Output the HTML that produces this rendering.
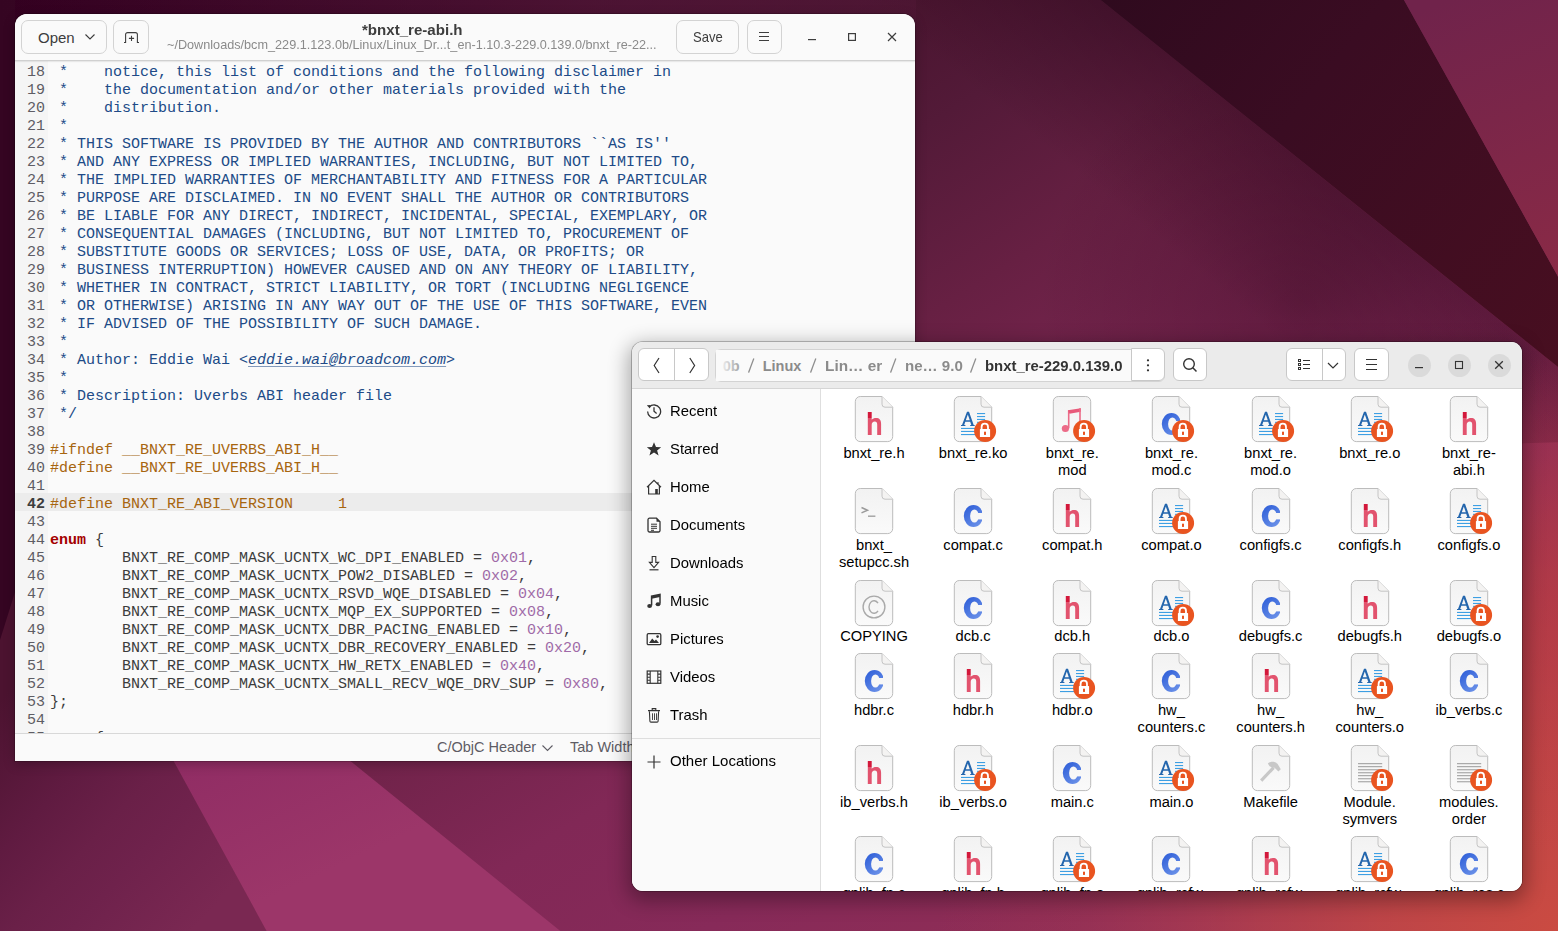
<!DOCTYPE html>
<html><head><meta charset="utf-8">
<style>
*{box-sizing:border-box}
html,body{margin:0;padding:0}
body{width:1558px;height:931px;overflow:hidden;position:relative;font-family:"Liberation Sans",sans-serif;background:#4a1530}
#bg{position:absolute;left:0;top:0}
#gedit{position:absolute;left:15px;top:14px;width:900px;height:747px;background:#fafafa;border-radius:12px 12px 0 0;overflow:hidden;box-shadow:0 0 0 1px rgba(0,0,0,0.18),0 3px 12px rgba(0,0,0,0.25)}
#ghead{position:absolute;left:0;top:0;width:900px;height:47px;background:#fafafa;border-bottom:1px solid #d0d0d0;box-shadow:0 1px 1px rgba(0,0,0,0.07);z-index:2}
.gbtn{position:absolute;top:6px;height:34px;border:1px solid #d3d3d3;border-radius:7px;background:#fafafa}
.gtxt{position:absolute;white-space:nowrap;color:#3d3d3d}
#code{position:absolute;left:0;top:47px;width:900px;height:672px;overflow:hidden;background:#fafafa}
#gutter{position:absolute;left:0;top:0;width:33px;height:672px;background:#f5f5f5}
.ln{position:absolute;left:0;width:900px;height:18px;font-family:"Liberation Mono",monospace;font-size:15px;line-height:18px;white-space:pre;color:#3c3c3c}
.ln.cur{background:#ececec}
.ln .n{position:absolute;left:0;top:3px;width:30px;text-align:right;color:#5e5c64}
.ln.cur .n{font-weight:bold;color:#3d3d3d}
.ln .t{position:absolute;left:35px;top:3px}
.cm{color:#204a87}
.em{color:#204a87;font-style:italic;text-decoration:underline;text-decoration-color:rgba(32,74,135,0.55);text-decoration-thickness:1px;text-underline-offset:2px}
.pp{color:#a7650f}
.kw{color:#a40000;font-weight:bold}
.nu{color:#a06aa8}
#status{position:absolute;left:0;top:719px;width:900px;height:28px;background:#fafafa;border-top:1px solid #d8d8d8}

.sx{display:inline-block;transform-origin:0 0}
#naut{position:absolute;left:632px;top:342px;width:890px;height:549px;border-radius:11px;overflow:hidden;background:#fff;box-shadow:0 0 0 1px rgba(0,0,0,0.23),0 6px 20px 4px rgba(0,0,0,0.32)}
#nhead{position:absolute;left:0;top:0;width:890px;height:47px;background:#ebebeb;border-bottom:1px solid #d5d5d5}
.nbtn{position:absolute;top:6.3px;height:33.2px;background:#fff;border:1px solid #c8c8c8;border-radius:6px}
.vdiv{position:absolute;top:7px;width:1px;height:32px;background:#c8c8c8}
.ic{position:absolute}
#pathbar{position:absolute;top:6.5px;height:33px;background:#fafafa;border:1px solid #d3d3d3;border-radius:6px}
.crumbs{position:absolute;left:0;top:0}
.cr{position:absolute;top:15.5px;font-size:14.5px;line-height:17px;font-weight:bold;color:#8b8b8b;white-space:nowrap}
.cr.cur{color:#333}
.sl{position:absolute;top:14px;font-size:14.5px;line-height:17px;color:#8b8b8b}
.pfade{position:absolute;top:7.5px;width:30px;height:31px;background:linear-gradient(90deg,#fafafa 10%,rgba(250,250,250,0))}
.wc{position:absolute;top:11.5px;width:23px;height:23px;border-radius:50%;background:#dadada}
#side{position:absolute;left:0;top:47px;width:189px;height:502px;background:#fafafa;border-right:1px solid #dedede}
.si{position:absolute;left:38.4px;font-size:14.5px;line-height:17px;color:#000;white-space:nowrap}
.sep{position:absolute;left:0;width:188px;height:1px;background:#dedede}
#content{position:absolute;left:189px;top:47px;width:701px;height:502px;background:#fff;overflow:hidden}
.fi{position:absolute}
.lab{position:absolute;width:100px;text-align:center;font-size:14.7px;line-height:17px;color:#000;white-space:nowrap}

</style></head><body>
<svg id="bg" width="1558" height="931" viewBox="0 0 1558 931">
<defs>
<linearGradient id="gM" x1="0" y1="0" x2="856" y2="1370" gradientUnits="userSpaceOnUse">
<stop offset="0" stop-color="#330020"/>
<stop offset="0.16" stop-color="#380524"/>
<stop offset="0.30" stop-color="#4a1530"/>
<stop offset="0.37" stop-color="#531a38"/>
<stop offset="0.47" stop-color="#672043"/>
<stop offset="0.62" stop-color="#812856"/>
<stop offset="0.72" stop-color="#872a59"/>
<stop offset="0.82" stop-color="#8e2d56"/>
<stop offset="1" stop-color="#98345e"/>
</linearGradient>
<radialGradient id="gO" cx="1558" cy="931" r="620" gradientUnits="userSpaceOnUse">
<stop offset="0" stop-color="#cd4c40" stop-opacity="0.95"/>
<stop offset="0.29" stop-color="#cd4c40" stop-opacity="0.72"/>
<stop offset="0.48" stop-color="#c94a42" stop-opacity="0.5"/>
<stop offset="0.77" stop-color="#b8404a" stop-opacity="0.15"/>
<stop offset="1" stop-color="#b8404a" stop-opacity="0"/>
</radialGradient>
<linearGradient id="gW" x1="1100" y1="0" x2="1600" y2="400" gradientUnits="userSpaceOnUse">
<stop offset="0" stop-color="#2f0a1e"/>
<stop offset="0.35" stop-color="#3a0c22"/>
<stop offset="1" stop-color="#4a0f20"/>
</linearGradient>
<linearGradient id="gR" x1="1450" y1="0" x2="1558" y2="280" gradientUnits="userSpaceOnUse">
<stop offset="0" stop-color="#70234b"/>
<stop offset="1" stop-color="#8a2a46"/>
</linearGradient>
<linearGradient id="gSh" x1="1100.7" y1="0" x2="1006" y2="116" gradientUnits="userSpaceOnUse">
<stop offset="0" stop-color="#1e0010" stop-opacity="0.32"/>
<stop offset="1" stop-color="#200010" stop-opacity="0"/>
</linearGradient>
<linearGradient id="gB" x1="0" y1="504" x2="200" y2="931" gradientUnits="userSpaceOnUse">
<stop offset="0" stop-color="#7e2558"/>
<stop offset="0.6" stop-color="#8e2b63"/>
<stop offset="1" stop-color="#9c3669"/>
</linearGradient>
<linearGradient id="gL" x1="0" y1="700" x2="220" y2="900" gradientUnits="userSpaceOnUse">
<stop offset="0" stop-color="#4c1330"/>
<stop offset="0.35" stop-color="#601b41"/>
<stop offset="0.55" stop-color="#6a2048"/>
<stop offset="0.7" stop-color="#6f224c"/>
<stop offset="1" stop-color="#7a2852"/>
</linearGradient>
<radialGradient id="gSh2" cx="1300" cy="300" r="260" gradientUnits="userSpaceOnUse"><stop offset="0" stop-color="#1e0010" stop-opacity="0.3"/><stop offset="1" stop-color="#1e0010" stop-opacity="0"/></radialGradient>
<linearGradient id="gTop" x1="0" y1="0" x2="920" y2="0" gradientUnits="userSpaceOnUse">
<stop offset="0" stop-color="#55193a" stop-opacity="0"/>
<stop offset="0.12" stop-color="#55193a" stop-opacity="0.1"/>
<stop offset="0.33" stop-color="#55193a" stop-opacity="0.32"/>
<stop offset="0.65" stop-color="#55193a" stop-opacity="0.62"/>
<stop offset="0.82" stop-color="#55193a" stop-opacity="0.58"/>
<stop offset="1" stop-color="#55193a" stop-opacity="0.35"/>
</linearGradient>
<radialGradient id="gRed" cx="1620" cy="600" r="270" gradientUnits="userSpaceOnUse"><stop offset="0" stop-color="#c43c3c" stop-opacity="0.5"/><stop offset="1" stop-color="#c43c3c" stop-opacity="0"/></radialGradient>
</defs>
<rect width="1558" height="931" fill="url(#gM)"/>
<rect width="1558" height="931" fill="url(#gO)"/>
<polygon points="1100.7,0 1649,440 1300,449 750,0" fill="url(#gSh)"/>
<polygon points="1100.7,0 1649,440 1558,449 1100,449 900,0" fill="url(#gSh2)"/>
<rect x="1300" y="330" width="258" height="601" fill="url(#gRed)"/>
<polygon points="1100.7,0 1404,0 1649,440" fill="url(#gW)"/>
<polygon points="1404,0 1558,0 1558,276.5" fill="url(#gR)"/>
<polygon points="0,477 33,504 266.6,931 0,931" fill="url(#gL)"/>
<polygon points="33,504 266.6,931 560.3,931" fill="url(#gB)"/>
<polygon points="0,0 15,0 15,592 0,640" fill="#350522"/>
<rect x="0" y="0" width="916" height="26" fill="url(#gTop)"/>
</svg>

<div id="gedit">
 <div id="ghead">
  <div class="gbtn" style="left:6px;width:85.5px"></div>
  <div class="gtxt" style="left:23px;top:14.5px;font-size:15px;line-height:18px">Open</div>
  <svg style="position:absolute;left:70px;top:20px" width="10" height="6" viewBox="0 0 10 6"><path d="M0.5 0.5 L5 5 L9.5 0.5" fill="none" stroke="#3d3d3d" stroke-width="1.1"/></svg>
  <div class="gbtn" style="left:98px;width:35.5px"></div>
  <svg style="position:absolute;left:105px;top:14px" width="22" height="18" viewBox="0 0 22 18"><path d="M4,14.5 H5.6 V6.6 A2 2 0 0 1 7.6,4.6 H15.4 A2 2 0 0 1 17.4,6.6 V14.5 H19 M11.5,7.8 V13 M8.9,10.4 H14.1" fill="none" stroke="#3d3d3d" stroke-width="1.1"/></svg>
  <div class="gtxt" style="left:347px;top:8px;font-size:14.5px;line-height:17px;font-weight:bold"><span class="sx" style="transform:scaleX(1.04)">*bnxt_re-abi.h</span></div>
  <div class="gtxt" style="left:152px;top:23px;font-size:13.5px;line-height:16px;color:#8a8a8a"><span class="sx" style="transform:scaleX(0.938)">~/Downloads/bcm_229.1.123.0b/Linux/Linux_Dr...t_en-1.10.3-229.0.139.0/bnxt_re-22...</span></div>
  <div class="gbtn" style="left:661px;width:63px"></div>
  <div class="gtxt" style="left:678px;top:14px;font-size:15px;line-height:18px"><span class="sx" style="transform:scaleX(0.87)">Save</span></div>
  <div class="gbtn" style="left:731.5px;width:35px"></div>
  <svg style="position:absolute;left:743px;top:17px" width="12" height="12" viewBox="0 0 12 12"><path d="M1 1.5 H11 M1 5.5 H11 M1 9.5 H11" fill="none" stroke="#3d3d3d" stroke-width="1.1"/></svg>
  <svg style="position:absolute;left:792px;top:23px" width="10" height="4" viewBox="0 0 10 4"><rect x="1" y="2" width="8" height="1.2" fill="#3d3d3d"/></svg>
  <svg style="position:absolute;left:832px;top:18px" width="10" height="10" viewBox="0 0 10 10"><rect x="1.6" y="1.6" width="6.8" height="6.8" fill="none" stroke="#3d3d3d" stroke-width="1.2"/></svg>
  <svg style="position:absolute;left:872px;top:18px" width="10" height="10" viewBox="0 0 10 10"><path d="M1 1 L9 9 M9 1 L1 9" stroke="#3d3d3d" stroke-width="1.2"/></svg>
 </div>
 <div id="code"><div id="gutter"></div>
<div class="ln" style="top:0px"><span class="n">18</span><span class="t"><span class="cm"> *    notice, this list of conditions and the following disclaimer in</span></span></div>
<div class="ln" style="top:18px"><span class="n">19</span><span class="t"><span class="cm"> *    the documentation and/or other materials provided with the</span></span></div>
<div class="ln" style="top:36px"><span class="n">20</span><span class="t"><span class="cm"> *    distribution.</span></span></div>
<div class="ln" style="top:54px"><span class="n">21</span><span class="t"><span class="cm"> *</span></span></div>
<div class="ln" style="top:72px"><span class="n">22</span><span class="t"><span class="cm"> * THIS SOFTWARE IS PROVIDED BY THE AUTHOR AND CONTRIBUTORS ``AS IS&#x27;&#x27;</span></span></div>
<div class="ln" style="top:90px"><span class="n">23</span><span class="t"><span class="cm"> * AND ANY EXPRESS OR IMPLIED WARRANTIES, INCLUDING, BUT NOT LIMITED TO,</span></span></div>
<div class="ln" style="top:108px"><span class="n">24</span><span class="t"><span class="cm"> * THE IMPLIED WARRANTIES OF MERCHANTABILITY AND FITNESS FOR A PARTICULAR</span></span></div>
<div class="ln" style="top:126px"><span class="n">25</span><span class="t"><span class="cm"> * PURPOSE ARE DISCLAIMED. IN NO EVENT SHALL THE AUTHOR OR CONTRIBUTORS</span></span></div>
<div class="ln" style="top:144px"><span class="n">26</span><span class="t"><span class="cm"> * BE LIABLE FOR ANY DIRECT, INDIRECT, INCIDENTAL, SPECIAL, EXEMPLARY, OR</span></span></div>
<div class="ln" style="top:162px"><span class="n">27</span><span class="t"><span class="cm"> * CONSEQUENTIAL DAMAGES (INCLUDING, BUT NOT LIMITED TO, PROCUREMENT OF</span></span></div>
<div class="ln" style="top:180px"><span class="n">28</span><span class="t"><span class="cm"> * SUBSTITUTE GOODS OR SERVICES; LOSS OF USE, DATA, OR PROFITS; OR</span></span></div>
<div class="ln" style="top:198px"><span class="n">29</span><span class="t"><span class="cm"> * BUSINESS INTERRUPTION) HOWEVER CAUSED AND ON ANY THEORY OF LIABILITY,</span></span></div>
<div class="ln" style="top:216px"><span class="n">30</span><span class="t"><span class="cm"> * WHETHER IN CONTRACT, STRICT LIABILITY, OR TORT (INCLUDING NEGLIGENCE</span></span></div>
<div class="ln" style="top:234px"><span class="n">31</span><span class="t"><span class="cm"> * OR OTHERWISE) ARISING IN ANY WAY OUT OF THE USE OF THIS SOFTWARE, EVEN</span></span></div>
<div class="ln" style="top:252px"><span class="n">32</span><span class="t"><span class="cm"> * IF ADVISED OF THE POSSIBILITY OF SUCH DAMAGE.</span></span></div>
<div class="ln" style="top:270px"><span class="n">33</span><span class="t"><span class="cm"> *</span></span></div>
<div class="ln" style="top:288px"><span class="n">34</span><span class="t"><span class="cm"> * Author: Eddie Wai &lt;</span><span class="em">eddie.wai@broadcom.com</span><span class="cm">&gt;</span></span></div>
<div class="ln" style="top:306px"><span class="n">35</span><span class="t"><span class="cm"> *</span></span></div>
<div class="ln" style="top:324px"><span class="n">36</span><span class="t"><span class="cm"> * Description: Uverbs ABI header file</span></span></div>
<div class="ln" style="top:342px"><span class="n">37</span><span class="t"><span class="cm"> */</span></span></div>
<div class="ln" style="top:360px"><span class="n">38</span><span class="t"></span></div>
<div class="ln" style="top:378px"><span class="n">39</span><span class="t"><span class="pp">#ifndef __BNXT_RE_UVERBS_ABI_H__</span></span></div>
<div class="ln" style="top:396px"><span class="n">40</span><span class="t"><span class="pp">#define __BNXT_RE_UVERBS_ABI_H__</span></span></div>
<div class="ln" style="top:414px"><span class="n">41</span><span class="t"></span></div>
<div class="ln cur" style="top:432px"><span class="n">42</span><span class="t"><span class="pp">#define BNXT_RE_ABI_VERSION     1</span></span></div>
<div class="ln" style="top:450px"><span class="n">43</span><span class="t"></span></div>
<div class="ln" style="top:468px"><span class="n">44</span><span class="t"><span class="kw">enum</span><span> {</span></span></div>
<div class="ln" style="top:486px"><span class="n">45</span><span class="t"><span>        BNXT_RE_COMP_MASK_UCNTX_WC_DPI_ENABLED = </span><span class="nu">0x01</span><span>,</span></span></div>
<div class="ln" style="top:504px"><span class="n">46</span><span class="t"><span>        BNXT_RE_COMP_MASK_UCNTX_POW2_DISABLED = </span><span class="nu">0x02</span><span>,</span></span></div>
<div class="ln" style="top:522px"><span class="n">47</span><span class="t"><span>        BNXT_RE_COMP_MASK_UCNTX_RSVD_WQE_DISABLED = </span><span class="nu">0x04</span><span>,</span></span></div>
<div class="ln" style="top:540px"><span class="n">48</span><span class="t"><span>        BNXT_RE_COMP_MASK_UCNTX_MQP_EX_SUPPORTED = </span><span class="nu">0x08</span><span>,</span></span></div>
<div class="ln" style="top:558px"><span class="n">49</span><span class="t"><span>        BNXT_RE_COMP_MASK_UCNTX_DBR_PACING_ENABLED = </span><span class="nu">0x10</span><span>,</span></span></div>
<div class="ln" style="top:576px"><span class="n">50</span><span class="t"><span>        BNXT_RE_COMP_MASK_UCNTX_DBR_RECOVERY_ENABLED = </span><span class="nu">0x20</span><span>,</span></span></div>
<div class="ln" style="top:594px"><span class="n">51</span><span class="t"><span>        BNXT_RE_COMP_MASK_UCNTX_HW_RETX_ENABLED = </span><span class="nu">0x40</span><span>,</span></span></div>
<div class="ln" style="top:612px"><span class="n">52</span><span class="t"><span>        BNXT_RE_COMP_MASK_UCNTX_SMALL_RECV_WQE_DRV_SUP = </span><span class="nu">0x80</span><span>,</span></span></div>
<div class="ln" style="top:630px"><span class="n">53</span><span class="t"><span>};</span></span></div>
<div class="ln" style="top:648px"><span class="n">54</span><span class="t"></span></div>
<div class="ln" style="top:666px"><span class="n">55</span><span class="t"><span class="kw">enum</span><span> {</span></span></div>
 </div>
 <div id="status">
  <div class="gtxt" style="left:422px;top:5px;font-size:14.5px;line-height:17px;color:#5e5c64">C/ObjC Header</div>
  <svg style="position:absolute;left:527px;top:11px" width="11" height="7" viewBox="0 0 11 7"><path d="M0.5 0.5 L5.5 5.5 L10.5 0.5" fill="none" stroke="#5e5c64" stroke-width="1.1"/></svg>
  <div class="gtxt" style="left:555px;top:5px;font-size:14.5px;line-height:17px;color:#5e5c64">Tab Width: 8</div>
 </div>
</div>

<div id="naut">
<svg width="0" height="0" style="position:absolute"><defs>
<linearGradient id="pg" x1="0" y1="1" x2="0" y2="47" gradientUnits="userSpaceOnUse"><stop offset="0" stop-color="#f2f2f2"/><stop offset="1" stop-color="#fafafa"/></linearGradient>
<linearGradient id="hg" x1="0" y1="0" x2="0" y2="48" gradientUnits="userSpaceOnUse"><stop offset="0.48" stop-color="#d3183b"/><stop offset="0.48" stop-color="#e2536e"/><stop offset="1" stop-color="#e2536e"/></linearGradient>
<linearGradient id="cg" x1="15" y1="18" x2="33" y2="40" gradientUnits="userSpaceOnUse"><stop offset="0" stop-color="#2a5bd7"/><stop offset="1" stop-color="#7196ea"/></linearGradient>
<mask id="cm" maskUnits="userSpaceOnUse" x="0" y="0" width="52" height="52"><rect width="52" height="52" fill="#fff"/><rect x="25" y="26" width="20" height="6.4" fill="#000"/><rect x="33" y="0" width="20" height="52" fill="#000"/></mask>
</defs></svg>
<div id="nhead">
<div class="nbtn" style="left:6.4px;width:70.2px;"></div>
<div class="vdiv" style="left:41.6px"></div>
<svg class="ic" style="left:20.5px;top:15px" width="8" height="17" viewBox="0 0 8 17"><path d="M6,1 L1.2,8.5 L6,16" fill="none" stroke="#333" stroke-width="1.2"/></svg>
<svg class="ic" style="left:56.5px;top:15px" width="8" height="17" viewBox="0 0 8 17"><path d="M0.8,1 L5.6,8.5 L0.8,16" fill="none" stroke="#333" stroke-width="1.2"/></svg>
<div id="pathbar" style="left:83.4px;width:449.9px"></div>
<div class="nbtn" style="left:498.6px;width:34.7px;border-radius:0 6px 6px 0"></div>
<svg class="ic" style="left:514px;top:15px" width="4" height="16" viewBox="0 0 4 16"><circle cx="2" cy="3.3" r="1.15" fill="#333"/><circle cx="2" cy="8.3" r="1.15" fill="#333"/><circle cx="2" cy="13.3" r="1.15" fill="#333"/></svg>
<svg class="ic" style="left:115.79999999999995px;top:16px" width="7" height="16" viewBox="0 0 7 16"><path d="M5.8,0.6 L0.6,14.6" stroke="#8e8e8e" stroke-width="1.3"/></svg>
<svg class="ic" style="left:178px;top:16px" width="7" height="16" viewBox="0 0 7 16"><path d="M5.8,0.6 L0.6,14.6" stroke="#8e8e8e" stroke-width="1.3"/></svg>
<svg class="ic" style="left:258px;top:16px" width="7" height="16" viewBox="0 0 7 16"><path d="M5.8,0.6 L0.6,14.6" stroke="#8e8e8e" stroke-width="1.3"/></svg>
<svg class="ic" style="left:337.79999999999995px;top:16px" width="7" height="16" viewBox="0 0 7 16"><path d="M5.8,0.6 L0.6,14.6" stroke="#8e8e8e" stroke-width="1.3"/></svg>
<span class="cr" style="left:90.7px"><span class="sx" style="transform:scaleX(1)">0b</span></span>
<span class="cr" style="left:130.7px"><span class="sx" style="transform:scaleX(1)">Linux</span></span>
<span class="cr" style="left:193px"><span class="sx" style="transform:scaleX(1.06)">Lin… er</span></span>
<span class="cr" style="left:273px"><span class="sx" style="transform:scaleX(1.04)">ne… 9.0</span></span>
<span class="cr cur" style="left:352.5px"><span class="sx" style="transform:scaleX(1.027)">bnxt_re-229.0.139.0</span></span>
<div class="pfade" style="left:84.4px"></div>
<div class="nbtn" style="left:540.5px;width:34.9px;"></div>
<svg class="ic" style="left:550px;top:15px" width="16" height="16" viewBox="0 0 16 16"><circle cx="7" cy="7" r="5.3" fill="none" stroke="#333" stroke-width="1.4"/><path d="M10.8,10.8 L14.5,14.5" stroke="#333" stroke-width="1.5"/></svg>
<div class="nbtn" style="left:654.4px;width:59.9px;"></div>
<div class="vdiv" style="left:689.7px"></div>
<svg class="ic" style="left:664px;top:15px" width="16" height="16" viewBox="0 0 16 16"><g fill="none" stroke="#333" stroke-width="1"><rect x="2.5" y="2.5" width="2" height="2"/><rect x="2.5" y="6.5" width="2" height="2"/><rect x="2.5" y="10.5" width="2" height="2"/><path d="M7,3.5 H14 M7,7.5 H14 M7,11.5 H14" stroke-width="1"/></g></svg>
<svg class="ic" style="left:695px;top:20px" width="12" height="8" viewBox="0 0 12 8"><path d="M1,1 L6,6 L11,1" fill="none" stroke="#333" stroke-width="1.2"/></svg>
<div class="nbtn" style="left:721.5px;width:35.1px;"></div>
<svg class="ic" style="left:733px;top:16px" width="14" height="14" viewBox="0 0 14 14"><path d="M1,1.5 H12 M1,6.5 H12 M1,11.5 H12" fill="none" stroke="#333" stroke-width="1"/></svg>
<div class="wc" style="left:775.5px"></div>
<div class="wc" style="left:815.5px"></div>
<div class="wc" style="left:855.5px"></div>
<svg class="ic" style="left:782px;top:17px" width="10" height="12" viewBox="0 0 10 12"><rect x="1" y="8" width="8" height="1.2" fill="#333"/></svg>
<svg class="ic" style="left:822px;top:18px" width="10" height="10" viewBox="0 0 10 10"><rect x="1.5" y="1.5" width="7" height="7" fill="none" stroke="#333" stroke-width="1.1"/></svg>
<svg class="ic" style="left:862px;top:18px" width="10" height="10" viewBox="0 0 10 10"><path d="M1.2,1.2 L8.8,8.8 M8.8,1.2 L1.2,8.8" fill="none" stroke="#333" stroke-width="1.3"/></svg>
</div>
<div id="side">
<div class="si" style="top:13.5px"><span class="sx" style="transform:scaleX(1.025)">Recent</span></div>
<svg class="ic" style="left:14.0px;top:14.0px" width="16" height="16" viewBox="0 0 16 16"><path d="M3.2,4.2 A6.5 6.5 0 1 1 1.6,8.6" fill="none" stroke="#333" stroke-width="1.3"/><path d="M0.8,2.2 L4.6,1.9 L3.9,5.6 Z" fill="#333"/><path d="M8,4.3 V8.3 L10.6,10.6" fill="none" stroke="#333" stroke-width="1.3"/></svg>
<div class="si" style="top:51.5px"><span class="sx" style="transform:scaleX(1.025)">Starred</span></div>
<svg class="ic" style="left:14.0px;top:52.0px" width="16" height="16" viewBox="0 0 16 16"><path d="M8,1.2 L10,6.1 L15.2,6.3 L11.1,9.5 L12.6,14.6 L8,11.6 L3.4,14.6 L4.9,9.5 L0.8,6.3 L6,6.1 Z" fill="#333"/></svg>
<div class="si" style="top:89.5px"><span class="sx" style="transform:scaleX(1.025)">Home</span></div>
<svg class="ic" style="left:14.0px;top:90.0px" width="16" height="16" viewBox="0 0 16 16"><path d="M1,8.2 L8,1.3 L15,8.2 M2.6,6.8 V15 H13.4 V6.8 M12,3.2 V5.3" fill="none" stroke="#333" stroke-width="1.2"/><rect x="9.2" y="10" width="2.6" height="5" fill="#333"/></svg>
<div class="si" style="top:127.5px"><span class="sx" style="transform:scaleX(1.025)">Documents</span></div>
<svg class="ic" style="left:14.0px;top:128.0px" width="16" height="16" viewBox="0 0 16 16"><path d="M3.5,1.2 H10.5 L14,4.7 V13.5 A1.5 1.5 0 0 1 12.5,15 H3.5 A1.5 1.5 0 0 1 2,13.5 V2.7 A1.5 1.5 0 0 1 3.5,1.2 Z" fill="none" stroke="#333" stroke-width="1.3"/><path d="M10.5,1.2 L14,4.7 H10.5 Z" fill="#333"/><path d="M5,7.2 H11 M5,9.3 H11 M5,11.3 H11 M5,13.3 H8" stroke="#333" stroke-width="1"/></svg>
<div class="si" style="top:165.5px"><span class="sx" style="transform:scaleX(1.025)">Downloads</span></div>
<svg class="ic" style="left:14.0px;top:166.0px" width="16" height="16" viewBox="0 0 16 16"><path d="M6.2,1.5 H9.8 V7.4 H12.6 L8,12.7 L3.4,7.4 H6.2 Z" fill="none" stroke="#333" stroke-width="1.1"/><path d="M3.5,14.8 H12.5" stroke="#333" stroke-width="1.2"/></svg>
<div class="si" style="top:203.5px"><span class="sx" style="transform:scaleX(1.025)">Music</span></div>
<svg class="ic" style="left:14.0px;top:204.0px" width="16" height="16" viewBox="0 0 16 16"><path d="M5.6,12.5 V3.2 L14,1.4 V10.8" fill="none" stroke="#333" stroke-width="1.5"/><path d="M5.6,3.2 L14,1.4 V4 L5.6,5.8 Z" fill="#333"/><ellipse cx="3.6" cy="12.9" rx="2.4" ry="2" fill="#333"/><ellipse cx="12" cy="11.2" rx="2.4" ry="2" fill="#333"/></svg>
<div class="si" style="top:241.5px"><span class="sx" style="transform:scaleX(1.025)">Pictures</span></div>
<svg class="ic" style="left:14.0px;top:242.0px" width="16" height="16" viewBox="0 0 16 16"><rect x="1.2" y="2.7" width="13.6" height="11" rx="1.2" fill="none" stroke="#333" stroke-width="1.3"/><path d="M3,12 L6.2,7.6 L8.5,10 L10,8.6 L13,12 Z" fill="#333"/><circle cx="11.6" cy="5.6" r="1.3" fill="#333"/></svg>
<div class="si" style="top:279.5px"><span class="sx" style="transform:scaleX(1.025)">Videos</span></div>
<svg class="ic" style="left:14.0px;top:280.0px" width="16" height="16" viewBox="0 0 16 16"><rect x="1.2" y="2" width="13.6" height="12.3" fill="none" stroke="#333" stroke-width="1.2"/><path d="M4.2,2 V14.3 M11.8,2 V14.3 M1.2,5.1 H4.2 M1.2,8.2 H4.2 M1.2,11.2 H4.2 M11.8,5.1 H14.8 M11.8,8.2 H14.8 M11.8,11.2 H14.8" stroke="#333" stroke-width="1.1"/></svg>
<div class="si" style="top:317.5px"><span class="sx" style="transform:scaleX(1.025)">Trash</span></div>
<svg class="ic" style="left:14.0px;top:318.0px" width="16" height="16" viewBox="0 0 16 16"><path d="M2,3.6 H14 M6.2,3.4 V1.6 H9.8 V3.4" fill="none" stroke="#333" stroke-width="1.1"/><path d="M3.4,4.2 L3.9,14.2 A1 1 0 0 0 4.9,15.1 H11.1 A1 1 0 0 0 12.1,14.2 L12.6,4.2" fill="none" stroke="#333" stroke-width="1.1"/><path d="M6.5,6.3 V13 M8.5,6.3 V13 M10.5,6.3 V13" stroke="#333" stroke-width="0.9"/></svg>
<div class="sep" style="top:349.0px"></div>
<div class="si" style="top:364.2px"><span class="sx" style="transform:scaleX(1.035)">Other Locations</span></div>
<svg class="ic" style="left:14.0px;top:364.7px" width="16" height="16" viewBox="0 0 16 16"><path d="M8,1.5 V14.5 M1.5,8 H14.5" stroke="#333" stroke-width="1.2"/></svg>
</div>
<div id="content">
<svg class="fi" style="left:29.0px;top:6px" width="52" height="52" viewBox="0 0 52 52"><path d="M10.3,1.5 H32 L42.7,12.2 V41.6 A5 5 0 0 1 37.7,46.6 H10.3 A5 5 0 0 1 5.3,41.6 V6.5 A5 5 0 0 1 10.3,1.5 Z" fill="url(#pg)" stroke="#bcbcbc" stroke-width="1"/><path d="M32,1.5 V9.2 A3 3 0 0 0 35,12.2 H42.7" fill="#f4f3f2" stroke="#c4c4c4" stroke-width="1"/><path d="M17.8,17 H21.7 V24.8 C22.8,23.6 24.2,23 26,23 C29.4,23 31.1,25 31.1,28.8 V40 H27.2 V29.6 C27.2,27.6 26.4,26.6 24.8,26.6 C22.8,26.6 21.7,27.9 21.7,30 V40 H17.8 Z" fill="url(#hg)"/></svg>
<div class="lab" style="left:3.0px;top:55.9px">bnxt_re.h</div>
<svg class="fi" style="left:128.14999999999998px;top:6px" width="52" height="52" viewBox="0 0 52 52"><path d="M10.3,1.5 H32 L42.7,12.2 V41.6 A5 5 0 0 1 37.7,46.6 H10.3 A5 5 0 0 1 5.3,41.6 V6.5 A5 5 0 0 1 10.3,1.5 Z" fill="url(#pg)" stroke="#bcbcbc" stroke-width="1"/><path d="M32,1.5 V9.2 A3 3 0 0 0 35,12.2 H42.7" fill="#f4f3f2" stroke="#c4c4c4" stroke-width="1"/><path fill-rule="evenodd" d="M18,16.7 H20 L24.7,30 H25.7 V30.9 H21.2 V30 H22.3 L21.2,26.7 H16.3 L15.2,30 H16.4 V30.9 H12 V30 H13 Z M16.8,25.3 H20.8 L18.8,19.4 Z" fill="#2466ad"/><g fill="#3d9fe3"><rect x="28" y="18" width="8.1" height="1.1"/><rect x="28" y="21" width="8.1" height="1.1"/><rect x="28" y="23.9" width="8.1" height="1.1"/><rect x="28" y="26.8" width="8.1" height="1.1"/><rect x="12" y="32.9" width="24.1" height="1.1"/><rect x="12" y="35.9" width="24.1" height="1.1"/><rect x="12" y="39" width="24.1" height="1.1"/></g><circle cx="36.1" cy="36" r="11" fill="#e95420"/><path d="M32.6,34.6 V31.9 A3.2 3.2 0 0 1 39,31.9 V34.6" fill="none" stroke="#fff" stroke-width="1.8"/><rect x="30.9" y="34.1" width="10.2" height="7.9" rx="0.6" fill="#fff"/><rect x="35" y="36.7" width="2" height="3.2" fill="#e95420"/></svg>
<div class="lab" style="left:102.14999999999998px;top:55.9px">bnxt_re.ko</div>
<svg class="fi" style="left:227.29999999999995px;top:6px" width="52" height="52" viewBox="0 0 52 52"><path d="M10.3,1.5 H37.7 A5 5 0 0 1 42.7,6.5 V41.6 A5 5 0 0 1 37.7,46.6 H10.3 A5 5 0 0 1 5.3,41.6 V6.5 A5 5 0 0 1 10.3,1.5 Z" fill="url(#pg)" stroke="#bcbcbc" stroke-width="1"/><g fill="#ec6b88"><circle cx="17.4" cy="33.5" r="3.6"/><rect x="19.9" y="15.3" width="1.6" height="18"/><path d="M19.9,15.3 L32.8,13.2 V16.7 L21.5,18.8 Z" fill="#e85a7a"/><rect x="31.2" y="13.2" width="1.6" height="15"/></g><circle cx="36.1" cy="36" r="11" fill="#e95420"/><path d="M32.6,34.6 V31.9 A3.2 3.2 0 0 1 39,31.9 V34.6" fill="none" stroke="#fff" stroke-width="1.8"/><rect x="30.9" y="34.1" width="10.2" height="7.9" rx="0.6" fill="#fff"/><rect x="35" y="36.7" width="2" height="3.2" fill="#e95420"/></svg>
<div class="lab" style="left:201.29999999999995px;top:55.9px">bnxt_re.<br>mod</div>
<svg class="fi" style="left:326.45000000000005px;top:6px" width="52" height="52" viewBox="0 0 52 52"><path d="M10.3,1.5 H32 L42.7,12.2 V41.6 A5 5 0 0 1 37.7,46.6 H10.3 A5 5 0 0 1 5.3,41.6 V6.5 A5 5 0 0 1 10.3,1.5 Z" fill="url(#pg)" stroke="#bcbcbc" stroke-width="1"/><path d="M32,1.5 V9.2 A3 3 0 0 0 35,12.2 H42.7" fill="#f4f3f2" stroke="#c4c4c4" stroke-width="1"/><g mask="url(#cm)"><path fill-rule="evenodd" d="M24.5,18 A9.7 11 0 1 0 24.5,40 A9.7 11 0 1 0 24.5,18 Z M25.4,22.4 A4.3 6.6 0 1 1 25.4,35.6 A4.3 6.6 0 1 1 25.4,22.4 Z" fill="url(#cg)"/></g><circle cx="36.1" cy="36" r="11" fill="#e95420"/><path d="M32.6,34.6 V31.9 A3.2 3.2 0 0 1 39,31.9 V34.6" fill="none" stroke="#fff" stroke-width="1.8"/><rect x="30.9" y="34.1" width="10.2" height="7.9" rx="0.6" fill="#fff"/><rect x="35" y="36.7" width="2" height="3.2" fill="#e95420"/></svg>
<div class="lab" style="left:300.45000000000005px;top:55.9px">bnxt_re.<br>mod.c</div>
<svg class="fi" style="left:425.5999999999999px;top:6px" width="52" height="52" viewBox="0 0 52 52"><path d="M10.3,1.5 H32 L42.7,12.2 V41.6 A5 5 0 0 1 37.7,46.6 H10.3 A5 5 0 0 1 5.3,41.6 V6.5 A5 5 0 0 1 10.3,1.5 Z" fill="url(#pg)" stroke="#bcbcbc" stroke-width="1"/><path d="M32,1.5 V9.2 A3 3 0 0 0 35,12.2 H42.7" fill="#f4f3f2" stroke="#c4c4c4" stroke-width="1"/><path fill-rule="evenodd" d="M18,16.7 H20 L24.7,30 H25.7 V30.9 H21.2 V30 H22.3 L21.2,26.7 H16.3 L15.2,30 H16.4 V30.9 H12 V30 H13 Z M16.8,25.3 H20.8 L18.8,19.4 Z" fill="#2466ad"/><g fill="#3d9fe3"><rect x="28" y="18" width="8.1" height="1.1"/><rect x="28" y="21" width="8.1" height="1.1"/><rect x="28" y="23.9" width="8.1" height="1.1"/><rect x="28" y="26.8" width="8.1" height="1.1"/><rect x="12" y="32.9" width="24.1" height="1.1"/><rect x="12" y="35.9" width="24.1" height="1.1"/><rect x="12" y="39" width="24.1" height="1.1"/></g><circle cx="36.1" cy="36" r="11" fill="#e95420"/><path d="M32.6,34.6 V31.9 A3.2 3.2 0 0 1 39,31.9 V34.6" fill="none" stroke="#fff" stroke-width="1.8"/><rect x="30.9" y="34.1" width="10.2" height="7.9" rx="0.6" fill="#fff"/><rect x="35" y="36.7" width="2" height="3.2" fill="#e95420"/></svg>
<div class="lab" style="left:399.5999999999999px;top:55.9px">bnxt_re.<br>mod.o</div>
<svg class="fi" style="left:524.75px;top:6px" width="52" height="52" viewBox="0 0 52 52"><path d="M10.3,1.5 H32 L42.7,12.2 V41.6 A5 5 0 0 1 37.7,46.6 H10.3 A5 5 0 0 1 5.3,41.6 V6.5 A5 5 0 0 1 10.3,1.5 Z" fill="url(#pg)" stroke="#bcbcbc" stroke-width="1"/><path d="M32,1.5 V9.2 A3 3 0 0 0 35,12.2 H42.7" fill="#f4f3f2" stroke="#c4c4c4" stroke-width="1"/><path fill-rule="evenodd" d="M18,16.7 H20 L24.7,30 H25.7 V30.9 H21.2 V30 H22.3 L21.2,26.7 H16.3 L15.2,30 H16.4 V30.9 H12 V30 H13 Z M16.8,25.3 H20.8 L18.8,19.4 Z" fill="#2466ad"/><g fill="#3d9fe3"><rect x="28" y="18" width="8.1" height="1.1"/><rect x="28" y="21" width="8.1" height="1.1"/><rect x="28" y="23.9" width="8.1" height="1.1"/><rect x="28" y="26.8" width="8.1" height="1.1"/><rect x="12" y="32.9" width="24.1" height="1.1"/><rect x="12" y="35.9" width="24.1" height="1.1"/><rect x="12" y="39" width="24.1" height="1.1"/></g><circle cx="36.1" cy="36" r="11" fill="#e95420"/><path d="M32.6,34.6 V31.9 A3.2 3.2 0 0 1 39,31.9 V34.6" fill="none" stroke="#fff" stroke-width="1.8"/><rect x="30.9" y="34.1" width="10.2" height="7.9" rx="0.6" fill="#fff"/><rect x="35" y="36.7" width="2" height="3.2" fill="#e95420"/></svg>
<div class="lab" style="left:498.75px;top:55.9px">bnxt_re.o</div>
<svg class="fi" style="left:623.9000000000001px;top:6px" width="52" height="52" viewBox="0 0 52 52"><path d="M10.3,1.5 H32 L42.7,12.2 V41.6 A5 5 0 0 1 37.7,46.6 H10.3 A5 5 0 0 1 5.3,41.6 V6.5 A5 5 0 0 1 10.3,1.5 Z" fill="url(#pg)" stroke="#bcbcbc" stroke-width="1"/><path d="M32,1.5 V9.2 A3 3 0 0 0 35,12.2 H42.7" fill="#f4f3f2" stroke="#c4c4c4" stroke-width="1"/><path d="M17.8,17 H21.7 V24.8 C22.8,23.6 24.2,23 26,23 C29.4,23 31.1,25 31.1,28.8 V40 H27.2 V29.6 C27.2,27.6 26.4,26.6 24.8,26.6 C22.8,26.6 21.7,27.9 21.7,30 V40 H17.8 Z" fill="url(#hg)"/></svg>
<div class="lab" style="left:597.9000000000001px;top:55.9px">bnxt_re-<br>abi.h</div>
<svg class="fi" style="left:29.0px;top:98px" width="52" height="52" viewBox="0 0 52 52"><path d="M10.3,1.5 H32 L42.7,12.2 V41.6 A5 5 0 0 1 37.7,46.6 H10.3 A5 5 0 0 1 5.3,41.6 V6.5 A5 5 0 0 1 10.3,1.5 Z" fill="url(#pg)" stroke="#bcbcbc" stroke-width="1"/><path d="M32,1.5 V9.2 A3 3 0 0 0 35,12.2 H42.7" fill="#f4f3f2" stroke="#c4c4c4" stroke-width="1"/><path d="M11.5,20.5 L17.5,23.2 L11.5,25.9" fill="none" stroke="#9a9a9a" stroke-width="1.5"/><rect x="18" y="28.5" width="7.4" height="1.4" fill="#a0a0a0"/></svg>
<div class="lab" style="left:3.0px;top:147.9px">bnxt_<br>setupcc.sh</div>
<svg class="fi" style="left:128.14999999999998px;top:98px" width="52" height="52" viewBox="0 0 52 52"><path d="M10.3,1.5 H32 L42.7,12.2 V41.6 A5 5 0 0 1 37.7,46.6 H10.3 A5 5 0 0 1 5.3,41.6 V6.5 A5 5 0 0 1 10.3,1.5 Z" fill="url(#pg)" stroke="#bcbcbc" stroke-width="1"/><path d="M32,1.5 V9.2 A3 3 0 0 0 35,12.2 H42.7" fill="#f4f3f2" stroke="#c4c4c4" stroke-width="1"/><g mask="url(#cm)"><path fill-rule="evenodd" d="M24.5,18 A9.7 11 0 1 0 24.5,40 A9.7 11 0 1 0 24.5,18 Z M25.4,22.4 A4.3 6.6 0 1 1 25.4,35.6 A4.3 6.6 0 1 1 25.4,22.4 Z" fill="url(#cg)"/></g></svg>
<div class="lab" style="left:102.14999999999998px;top:147.9px">compat.c</div>
<svg class="fi" style="left:227.29999999999995px;top:98px" width="52" height="52" viewBox="0 0 52 52"><path d="M10.3,1.5 H32 L42.7,12.2 V41.6 A5 5 0 0 1 37.7,46.6 H10.3 A5 5 0 0 1 5.3,41.6 V6.5 A5 5 0 0 1 10.3,1.5 Z" fill="url(#pg)" stroke="#bcbcbc" stroke-width="1"/><path d="M32,1.5 V9.2 A3 3 0 0 0 35,12.2 H42.7" fill="#f4f3f2" stroke="#c4c4c4" stroke-width="1"/><path d="M17.8,17 H21.7 V24.8 C22.8,23.6 24.2,23 26,23 C29.4,23 31.1,25 31.1,28.8 V40 H27.2 V29.6 C27.2,27.6 26.4,26.6 24.8,26.6 C22.8,26.6 21.7,27.9 21.7,30 V40 H17.8 Z" fill="url(#hg)"/></svg>
<div class="lab" style="left:201.29999999999995px;top:147.9px">compat.h</div>
<svg class="fi" style="left:326.45000000000005px;top:98px" width="52" height="52" viewBox="0 0 52 52"><path d="M10.3,1.5 H32 L42.7,12.2 V41.6 A5 5 0 0 1 37.7,46.6 H10.3 A5 5 0 0 1 5.3,41.6 V6.5 A5 5 0 0 1 10.3,1.5 Z" fill="url(#pg)" stroke="#bcbcbc" stroke-width="1"/><path d="M32,1.5 V9.2 A3 3 0 0 0 35,12.2 H42.7" fill="#f4f3f2" stroke="#c4c4c4" stroke-width="1"/><path fill-rule="evenodd" d="M18,16.7 H20 L24.7,30 H25.7 V30.9 H21.2 V30 H22.3 L21.2,26.7 H16.3 L15.2,30 H16.4 V30.9 H12 V30 H13 Z M16.8,25.3 H20.8 L18.8,19.4 Z" fill="#2466ad"/><g fill="#3d9fe3"><rect x="28" y="18" width="8.1" height="1.1"/><rect x="28" y="21" width="8.1" height="1.1"/><rect x="28" y="23.9" width="8.1" height="1.1"/><rect x="28" y="26.8" width="8.1" height="1.1"/><rect x="12" y="32.9" width="24.1" height="1.1"/><rect x="12" y="35.9" width="24.1" height="1.1"/><rect x="12" y="39" width="24.1" height="1.1"/></g><circle cx="36.1" cy="36" r="11" fill="#e95420"/><path d="M32.6,34.6 V31.9 A3.2 3.2 0 0 1 39,31.9 V34.6" fill="none" stroke="#fff" stroke-width="1.8"/><rect x="30.9" y="34.1" width="10.2" height="7.9" rx="0.6" fill="#fff"/><rect x="35" y="36.7" width="2" height="3.2" fill="#e95420"/></svg>
<div class="lab" style="left:300.45000000000005px;top:147.9px">compat.o</div>
<svg class="fi" style="left:425.5999999999999px;top:98px" width="52" height="52" viewBox="0 0 52 52"><path d="M10.3,1.5 H32 L42.7,12.2 V41.6 A5 5 0 0 1 37.7,46.6 H10.3 A5 5 0 0 1 5.3,41.6 V6.5 A5 5 0 0 1 10.3,1.5 Z" fill="url(#pg)" stroke="#bcbcbc" stroke-width="1"/><path d="M32,1.5 V9.2 A3 3 0 0 0 35,12.2 H42.7" fill="#f4f3f2" stroke="#c4c4c4" stroke-width="1"/><g mask="url(#cm)"><path fill-rule="evenodd" d="M24.5,18 A9.7 11 0 1 0 24.5,40 A9.7 11 0 1 0 24.5,18 Z M25.4,22.4 A4.3 6.6 0 1 1 25.4,35.6 A4.3 6.6 0 1 1 25.4,22.4 Z" fill="url(#cg)"/></g></svg>
<div class="lab" style="left:399.5999999999999px;top:147.9px">configfs.c</div>
<svg class="fi" style="left:524.75px;top:98px" width="52" height="52" viewBox="0 0 52 52"><path d="M10.3,1.5 H32 L42.7,12.2 V41.6 A5 5 0 0 1 37.7,46.6 H10.3 A5 5 0 0 1 5.3,41.6 V6.5 A5 5 0 0 1 10.3,1.5 Z" fill="url(#pg)" stroke="#bcbcbc" stroke-width="1"/><path d="M32,1.5 V9.2 A3 3 0 0 0 35,12.2 H42.7" fill="#f4f3f2" stroke="#c4c4c4" stroke-width="1"/><path d="M17.8,17 H21.7 V24.8 C22.8,23.6 24.2,23 26,23 C29.4,23 31.1,25 31.1,28.8 V40 H27.2 V29.6 C27.2,27.6 26.4,26.6 24.8,26.6 C22.8,26.6 21.7,27.9 21.7,30 V40 H17.8 Z" fill="url(#hg)"/></svg>
<div class="lab" style="left:498.75px;top:147.9px">configfs.h</div>
<svg class="fi" style="left:623.9000000000001px;top:98px" width="52" height="52" viewBox="0 0 52 52"><path d="M10.3,1.5 H32 L42.7,12.2 V41.6 A5 5 0 0 1 37.7,46.6 H10.3 A5 5 0 0 1 5.3,41.6 V6.5 A5 5 0 0 1 10.3,1.5 Z" fill="url(#pg)" stroke="#bcbcbc" stroke-width="1"/><path d="M32,1.5 V9.2 A3 3 0 0 0 35,12.2 H42.7" fill="#f4f3f2" stroke="#c4c4c4" stroke-width="1"/><path fill-rule="evenodd" d="M18,16.7 H20 L24.7,30 H25.7 V30.9 H21.2 V30 H22.3 L21.2,26.7 H16.3 L15.2,30 H16.4 V30.9 H12 V30 H13 Z M16.8,25.3 H20.8 L18.8,19.4 Z" fill="#2466ad"/><g fill="#3d9fe3"><rect x="28" y="18" width="8.1" height="1.1"/><rect x="28" y="21" width="8.1" height="1.1"/><rect x="28" y="23.9" width="8.1" height="1.1"/><rect x="28" y="26.8" width="8.1" height="1.1"/><rect x="12" y="32.9" width="24.1" height="1.1"/><rect x="12" y="35.9" width="24.1" height="1.1"/><rect x="12" y="39" width="24.1" height="1.1"/></g><circle cx="36.1" cy="36" r="11" fill="#e95420"/><path d="M32.6,34.6 V31.9 A3.2 3.2 0 0 1 39,31.9 V34.6" fill="none" stroke="#fff" stroke-width="1.8"/><rect x="30.9" y="34.1" width="10.2" height="7.9" rx="0.6" fill="#fff"/><rect x="35" y="36.7" width="2" height="3.2" fill="#e95420"/></svg>
<div class="lab" style="left:597.9000000000001px;top:147.9px">configfs.o</div>
<svg class="fi" style="left:29.0px;top:189.5px" width="52" height="52" viewBox="0 0 52 52"><path d="M10.3,1.5 H32 L42.7,12.2 V41.6 A5 5 0 0 1 37.7,46.6 H10.3 A5 5 0 0 1 5.3,41.6 V6.5 A5 5 0 0 1 10.3,1.5 Z" fill="url(#pg)" stroke="#bcbcbc" stroke-width="1"/><path d="M32,1.5 V9.2 A3 3 0 0 0 35,12.2 H42.7" fill="#f4f3f2" stroke="#c4c4c4" stroke-width="1"/><circle cx="24" cy="28" r="10.9" fill="none" stroke="#a9a9a9" stroke-width="1.4"/><path d="M28,24.2 A5 6.3 0 1 0 28,31.8" fill="none" stroke="#a9a9a9" stroke-width="1.4"/></svg>
<div class="lab" style="left:3.0px;top:239.4px">COPYING</div>
<svg class="fi" style="left:128.14999999999998px;top:189.5px" width="52" height="52" viewBox="0 0 52 52"><path d="M10.3,1.5 H32 L42.7,12.2 V41.6 A5 5 0 0 1 37.7,46.6 H10.3 A5 5 0 0 1 5.3,41.6 V6.5 A5 5 0 0 1 10.3,1.5 Z" fill="url(#pg)" stroke="#bcbcbc" stroke-width="1"/><path d="M32,1.5 V9.2 A3 3 0 0 0 35,12.2 H42.7" fill="#f4f3f2" stroke="#c4c4c4" stroke-width="1"/><g mask="url(#cm)"><path fill-rule="evenodd" d="M24.5,18 A9.7 11 0 1 0 24.5,40 A9.7 11 0 1 0 24.5,18 Z M25.4,22.4 A4.3 6.6 0 1 1 25.4,35.6 A4.3 6.6 0 1 1 25.4,22.4 Z" fill="url(#cg)"/></g></svg>
<div class="lab" style="left:102.14999999999998px;top:239.4px">dcb.c</div>
<svg class="fi" style="left:227.29999999999995px;top:189.5px" width="52" height="52" viewBox="0 0 52 52"><path d="M10.3,1.5 H32 L42.7,12.2 V41.6 A5 5 0 0 1 37.7,46.6 H10.3 A5 5 0 0 1 5.3,41.6 V6.5 A5 5 0 0 1 10.3,1.5 Z" fill="url(#pg)" stroke="#bcbcbc" stroke-width="1"/><path d="M32,1.5 V9.2 A3 3 0 0 0 35,12.2 H42.7" fill="#f4f3f2" stroke="#c4c4c4" stroke-width="1"/><path d="M17.8,17 H21.7 V24.8 C22.8,23.6 24.2,23 26,23 C29.4,23 31.1,25 31.1,28.8 V40 H27.2 V29.6 C27.2,27.6 26.4,26.6 24.8,26.6 C22.8,26.6 21.7,27.9 21.7,30 V40 H17.8 Z" fill="url(#hg)"/></svg>
<div class="lab" style="left:201.29999999999995px;top:239.4px">dcb.h</div>
<svg class="fi" style="left:326.45000000000005px;top:189.5px" width="52" height="52" viewBox="0 0 52 52"><path d="M10.3,1.5 H32 L42.7,12.2 V41.6 A5 5 0 0 1 37.7,46.6 H10.3 A5 5 0 0 1 5.3,41.6 V6.5 A5 5 0 0 1 10.3,1.5 Z" fill="url(#pg)" stroke="#bcbcbc" stroke-width="1"/><path d="M32,1.5 V9.2 A3 3 0 0 0 35,12.2 H42.7" fill="#f4f3f2" stroke="#c4c4c4" stroke-width="1"/><path fill-rule="evenodd" d="M18,16.7 H20 L24.7,30 H25.7 V30.9 H21.2 V30 H22.3 L21.2,26.7 H16.3 L15.2,30 H16.4 V30.9 H12 V30 H13 Z M16.8,25.3 H20.8 L18.8,19.4 Z" fill="#2466ad"/><g fill="#3d9fe3"><rect x="28" y="18" width="8.1" height="1.1"/><rect x="28" y="21" width="8.1" height="1.1"/><rect x="28" y="23.9" width="8.1" height="1.1"/><rect x="28" y="26.8" width="8.1" height="1.1"/><rect x="12" y="32.9" width="24.1" height="1.1"/><rect x="12" y="35.9" width="24.1" height="1.1"/><rect x="12" y="39" width="24.1" height="1.1"/></g><circle cx="36.1" cy="36" r="11" fill="#e95420"/><path d="M32.6,34.6 V31.9 A3.2 3.2 0 0 1 39,31.9 V34.6" fill="none" stroke="#fff" stroke-width="1.8"/><rect x="30.9" y="34.1" width="10.2" height="7.9" rx="0.6" fill="#fff"/><rect x="35" y="36.7" width="2" height="3.2" fill="#e95420"/></svg>
<div class="lab" style="left:300.45000000000005px;top:239.4px">dcb.o</div>
<svg class="fi" style="left:425.5999999999999px;top:189.5px" width="52" height="52" viewBox="0 0 52 52"><path d="M10.3,1.5 H32 L42.7,12.2 V41.6 A5 5 0 0 1 37.7,46.6 H10.3 A5 5 0 0 1 5.3,41.6 V6.5 A5 5 0 0 1 10.3,1.5 Z" fill="url(#pg)" stroke="#bcbcbc" stroke-width="1"/><path d="M32,1.5 V9.2 A3 3 0 0 0 35,12.2 H42.7" fill="#f4f3f2" stroke="#c4c4c4" stroke-width="1"/><g mask="url(#cm)"><path fill-rule="evenodd" d="M24.5,18 A9.7 11 0 1 0 24.5,40 A9.7 11 0 1 0 24.5,18 Z M25.4,22.4 A4.3 6.6 0 1 1 25.4,35.6 A4.3 6.6 0 1 1 25.4,22.4 Z" fill="url(#cg)"/></g></svg>
<div class="lab" style="left:399.5999999999999px;top:239.4px">debugfs.c</div>
<svg class="fi" style="left:524.75px;top:189.5px" width="52" height="52" viewBox="0 0 52 52"><path d="M10.3,1.5 H32 L42.7,12.2 V41.6 A5 5 0 0 1 37.7,46.6 H10.3 A5 5 0 0 1 5.3,41.6 V6.5 A5 5 0 0 1 10.3,1.5 Z" fill="url(#pg)" stroke="#bcbcbc" stroke-width="1"/><path d="M32,1.5 V9.2 A3 3 0 0 0 35,12.2 H42.7" fill="#f4f3f2" stroke="#c4c4c4" stroke-width="1"/><path d="M17.8,17 H21.7 V24.8 C22.8,23.6 24.2,23 26,23 C29.4,23 31.1,25 31.1,28.8 V40 H27.2 V29.6 C27.2,27.6 26.4,26.6 24.8,26.6 C22.8,26.6 21.7,27.9 21.7,30 V40 H17.8 Z" fill="url(#hg)"/></svg>
<div class="lab" style="left:498.75px;top:239.4px">debugfs.h</div>
<svg class="fi" style="left:623.9000000000001px;top:189.5px" width="52" height="52" viewBox="0 0 52 52"><path d="M10.3,1.5 H32 L42.7,12.2 V41.6 A5 5 0 0 1 37.7,46.6 H10.3 A5 5 0 0 1 5.3,41.6 V6.5 A5 5 0 0 1 10.3,1.5 Z" fill="url(#pg)" stroke="#bcbcbc" stroke-width="1"/><path d="M32,1.5 V9.2 A3 3 0 0 0 35,12.2 H42.7" fill="#f4f3f2" stroke="#c4c4c4" stroke-width="1"/><path fill-rule="evenodd" d="M18,16.7 H20 L24.7,30 H25.7 V30.9 H21.2 V30 H22.3 L21.2,26.7 H16.3 L15.2,30 H16.4 V30.9 H12 V30 H13 Z M16.8,25.3 H20.8 L18.8,19.4 Z" fill="#2466ad"/><g fill="#3d9fe3"><rect x="28" y="18" width="8.1" height="1.1"/><rect x="28" y="21" width="8.1" height="1.1"/><rect x="28" y="23.9" width="8.1" height="1.1"/><rect x="28" y="26.8" width="8.1" height="1.1"/><rect x="12" y="32.9" width="24.1" height="1.1"/><rect x="12" y="35.9" width="24.1" height="1.1"/><rect x="12" y="39" width="24.1" height="1.1"/></g><circle cx="36.1" cy="36" r="11" fill="#e95420"/><path d="M32.6,34.6 V31.9 A3.2 3.2 0 0 1 39,31.9 V34.6" fill="none" stroke="#fff" stroke-width="1.8"/><rect x="30.9" y="34.1" width="10.2" height="7.9" rx="0.6" fill="#fff"/><rect x="35" y="36.7" width="2" height="3.2" fill="#e95420"/></svg>
<div class="lab" style="left:597.9000000000001px;top:239.4px">debugfs.o</div>
<svg class="fi" style="left:29.0px;top:263px" width="52" height="52" viewBox="0 0 52 52"><path d="M10.3,1.5 H32 L42.7,12.2 V41.6 A5 5 0 0 1 37.7,46.6 H10.3 A5 5 0 0 1 5.3,41.6 V6.5 A5 5 0 0 1 10.3,1.5 Z" fill="url(#pg)" stroke="#bcbcbc" stroke-width="1"/><path d="M32,1.5 V9.2 A3 3 0 0 0 35,12.2 H42.7" fill="#f4f3f2" stroke="#c4c4c4" stroke-width="1"/><g mask="url(#cm)"><path fill-rule="evenodd" d="M24.5,18 A9.7 11 0 1 0 24.5,40 A9.7 11 0 1 0 24.5,18 Z M25.4,22.4 A4.3 6.6 0 1 1 25.4,35.6 A4.3 6.6 0 1 1 25.4,22.4 Z" fill="url(#cg)"/></g></svg>
<div class="lab" style="left:3.0px;top:312.9px">hdbr.c</div>
<svg class="fi" style="left:128.14999999999998px;top:263px" width="52" height="52" viewBox="0 0 52 52"><path d="M10.3,1.5 H32 L42.7,12.2 V41.6 A5 5 0 0 1 37.7,46.6 H10.3 A5 5 0 0 1 5.3,41.6 V6.5 A5 5 0 0 1 10.3,1.5 Z" fill="url(#pg)" stroke="#bcbcbc" stroke-width="1"/><path d="M32,1.5 V9.2 A3 3 0 0 0 35,12.2 H42.7" fill="#f4f3f2" stroke="#c4c4c4" stroke-width="1"/><path d="M17.8,17 H21.7 V24.8 C22.8,23.6 24.2,23 26,23 C29.4,23 31.1,25 31.1,28.8 V40 H27.2 V29.6 C27.2,27.6 26.4,26.6 24.8,26.6 C22.8,26.6 21.7,27.9 21.7,30 V40 H17.8 Z" fill="url(#hg)"/></svg>
<div class="lab" style="left:102.14999999999998px;top:312.9px">hdbr.h</div>
<svg class="fi" style="left:227.29999999999995px;top:263px" width="52" height="52" viewBox="0 0 52 52"><path d="M10.3,1.5 H32 L42.7,12.2 V41.6 A5 5 0 0 1 37.7,46.6 H10.3 A5 5 0 0 1 5.3,41.6 V6.5 A5 5 0 0 1 10.3,1.5 Z" fill="url(#pg)" stroke="#bcbcbc" stroke-width="1"/><path d="M32,1.5 V9.2 A3 3 0 0 0 35,12.2 H42.7" fill="#f4f3f2" stroke="#c4c4c4" stroke-width="1"/><path fill-rule="evenodd" d="M18,16.7 H20 L24.7,30 H25.7 V30.9 H21.2 V30 H22.3 L21.2,26.7 H16.3 L15.2,30 H16.4 V30.9 H12 V30 H13 Z M16.8,25.3 H20.8 L18.8,19.4 Z" fill="#2466ad"/><g fill="#3d9fe3"><rect x="28" y="18" width="8.1" height="1.1"/><rect x="28" y="21" width="8.1" height="1.1"/><rect x="28" y="23.9" width="8.1" height="1.1"/><rect x="28" y="26.8" width="8.1" height="1.1"/><rect x="12" y="32.9" width="24.1" height="1.1"/><rect x="12" y="35.9" width="24.1" height="1.1"/><rect x="12" y="39" width="24.1" height="1.1"/></g><circle cx="36.1" cy="36" r="11" fill="#e95420"/><path d="M32.6,34.6 V31.9 A3.2 3.2 0 0 1 39,31.9 V34.6" fill="none" stroke="#fff" stroke-width="1.8"/><rect x="30.9" y="34.1" width="10.2" height="7.9" rx="0.6" fill="#fff"/><rect x="35" y="36.7" width="2" height="3.2" fill="#e95420"/></svg>
<div class="lab" style="left:201.29999999999995px;top:312.9px">hdbr.o</div>
<svg class="fi" style="left:326.45000000000005px;top:263px" width="52" height="52" viewBox="0 0 52 52"><path d="M10.3,1.5 H32 L42.7,12.2 V41.6 A5 5 0 0 1 37.7,46.6 H10.3 A5 5 0 0 1 5.3,41.6 V6.5 A5 5 0 0 1 10.3,1.5 Z" fill="url(#pg)" stroke="#bcbcbc" stroke-width="1"/><path d="M32,1.5 V9.2 A3 3 0 0 0 35,12.2 H42.7" fill="#f4f3f2" stroke="#c4c4c4" stroke-width="1"/><g mask="url(#cm)"><path fill-rule="evenodd" d="M24.5,18 A9.7 11 0 1 0 24.5,40 A9.7 11 0 1 0 24.5,18 Z M25.4,22.4 A4.3 6.6 0 1 1 25.4,35.6 A4.3 6.6 0 1 1 25.4,22.4 Z" fill="url(#cg)"/></g></svg>
<div class="lab" style="left:300.45000000000005px;top:312.9px">hw_<br>counters.c</div>
<svg class="fi" style="left:425.5999999999999px;top:263px" width="52" height="52" viewBox="0 0 52 52"><path d="M10.3,1.5 H32 L42.7,12.2 V41.6 A5 5 0 0 1 37.7,46.6 H10.3 A5 5 0 0 1 5.3,41.6 V6.5 A5 5 0 0 1 10.3,1.5 Z" fill="url(#pg)" stroke="#bcbcbc" stroke-width="1"/><path d="M32,1.5 V9.2 A3 3 0 0 0 35,12.2 H42.7" fill="#f4f3f2" stroke="#c4c4c4" stroke-width="1"/><path d="M17.8,17 H21.7 V24.8 C22.8,23.6 24.2,23 26,23 C29.4,23 31.1,25 31.1,28.8 V40 H27.2 V29.6 C27.2,27.6 26.4,26.6 24.8,26.6 C22.8,26.6 21.7,27.9 21.7,30 V40 H17.8 Z" fill="url(#hg)"/></svg>
<div class="lab" style="left:399.5999999999999px;top:312.9px">hw_<br>counters.h</div>
<svg class="fi" style="left:524.75px;top:263px" width="52" height="52" viewBox="0 0 52 52"><path d="M10.3,1.5 H32 L42.7,12.2 V41.6 A5 5 0 0 1 37.7,46.6 H10.3 A5 5 0 0 1 5.3,41.6 V6.5 A5 5 0 0 1 10.3,1.5 Z" fill="url(#pg)" stroke="#bcbcbc" stroke-width="1"/><path d="M32,1.5 V9.2 A3 3 0 0 0 35,12.2 H42.7" fill="#f4f3f2" stroke="#c4c4c4" stroke-width="1"/><path fill-rule="evenodd" d="M18,16.7 H20 L24.7,30 H25.7 V30.9 H21.2 V30 H22.3 L21.2,26.7 H16.3 L15.2,30 H16.4 V30.9 H12 V30 H13 Z M16.8,25.3 H20.8 L18.8,19.4 Z" fill="#2466ad"/><g fill="#3d9fe3"><rect x="28" y="18" width="8.1" height="1.1"/><rect x="28" y="21" width="8.1" height="1.1"/><rect x="28" y="23.9" width="8.1" height="1.1"/><rect x="28" y="26.8" width="8.1" height="1.1"/><rect x="12" y="32.9" width="24.1" height="1.1"/><rect x="12" y="35.9" width="24.1" height="1.1"/><rect x="12" y="39" width="24.1" height="1.1"/></g><circle cx="36.1" cy="36" r="11" fill="#e95420"/><path d="M32.6,34.6 V31.9 A3.2 3.2 0 0 1 39,31.9 V34.6" fill="none" stroke="#fff" stroke-width="1.8"/><rect x="30.9" y="34.1" width="10.2" height="7.9" rx="0.6" fill="#fff"/><rect x="35" y="36.7" width="2" height="3.2" fill="#e95420"/></svg>
<div class="lab" style="left:498.75px;top:312.9px">hw_<br>counters.o</div>
<svg class="fi" style="left:623.9000000000001px;top:263px" width="52" height="52" viewBox="0 0 52 52"><path d="M10.3,1.5 H32 L42.7,12.2 V41.6 A5 5 0 0 1 37.7,46.6 H10.3 A5 5 0 0 1 5.3,41.6 V6.5 A5 5 0 0 1 10.3,1.5 Z" fill="url(#pg)" stroke="#bcbcbc" stroke-width="1"/><path d="M32,1.5 V9.2 A3 3 0 0 0 35,12.2 H42.7" fill="#f4f3f2" stroke="#c4c4c4" stroke-width="1"/><g mask="url(#cm)"><path fill-rule="evenodd" d="M24.5,18 A9.7 11 0 1 0 24.5,40 A9.7 11 0 1 0 24.5,18 Z M25.4,22.4 A4.3 6.6 0 1 1 25.4,35.6 A4.3 6.6 0 1 1 25.4,22.4 Z" fill="url(#cg)"/></g></svg>
<div class="lab" style="left:597.9000000000001px;top:312.9px">ib_verbs.c</div>
<svg class="fi" style="left:29.0px;top:355px" width="52" height="52" viewBox="0 0 52 52"><path d="M10.3,1.5 H32 L42.7,12.2 V41.6 A5 5 0 0 1 37.7,46.6 H10.3 A5 5 0 0 1 5.3,41.6 V6.5 A5 5 0 0 1 10.3,1.5 Z" fill="url(#pg)" stroke="#bcbcbc" stroke-width="1"/><path d="M32,1.5 V9.2 A3 3 0 0 0 35,12.2 H42.7" fill="#f4f3f2" stroke="#c4c4c4" stroke-width="1"/><path d="M17.8,17 H21.7 V24.8 C22.8,23.6 24.2,23 26,23 C29.4,23 31.1,25 31.1,28.8 V40 H27.2 V29.6 C27.2,27.6 26.4,26.6 24.8,26.6 C22.8,26.6 21.7,27.9 21.7,30 V40 H17.8 Z" fill="url(#hg)"/></svg>
<div class="lab" style="left:3.0px;top:404.9px">ib_verbs.h</div>
<svg class="fi" style="left:128.14999999999998px;top:355px" width="52" height="52" viewBox="0 0 52 52"><path d="M10.3,1.5 H32 L42.7,12.2 V41.6 A5 5 0 0 1 37.7,46.6 H10.3 A5 5 0 0 1 5.3,41.6 V6.5 A5 5 0 0 1 10.3,1.5 Z" fill="url(#pg)" stroke="#bcbcbc" stroke-width="1"/><path d="M32,1.5 V9.2 A3 3 0 0 0 35,12.2 H42.7" fill="#f4f3f2" stroke="#c4c4c4" stroke-width="1"/><path fill-rule="evenodd" d="M18,16.7 H20 L24.7,30 H25.7 V30.9 H21.2 V30 H22.3 L21.2,26.7 H16.3 L15.2,30 H16.4 V30.9 H12 V30 H13 Z M16.8,25.3 H20.8 L18.8,19.4 Z" fill="#2466ad"/><g fill="#3d9fe3"><rect x="28" y="18" width="8.1" height="1.1"/><rect x="28" y="21" width="8.1" height="1.1"/><rect x="28" y="23.9" width="8.1" height="1.1"/><rect x="28" y="26.8" width="8.1" height="1.1"/><rect x="12" y="32.9" width="24.1" height="1.1"/><rect x="12" y="35.9" width="24.1" height="1.1"/><rect x="12" y="39" width="24.1" height="1.1"/></g><circle cx="36.1" cy="36" r="11" fill="#e95420"/><path d="M32.6,34.6 V31.9 A3.2 3.2 0 0 1 39,31.9 V34.6" fill="none" stroke="#fff" stroke-width="1.8"/><rect x="30.9" y="34.1" width="10.2" height="7.9" rx="0.6" fill="#fff"/><rect x="35" y="36.7" width="2" height="3.2" fill="#e95420"/></svg>
<div class="lab" style="left:102.14999999999998px;top:404.9px">ib_verbs.o</div>
<svg class="fi" style="left:227.29999999999995px;top:355px" width="52" height="52" viewBox="0 0 52 52"><path d="M10.3,1.5 H32 L42.7,12.2 V41.6 A5 5 0 0 1 37.7,46.6 H10.3 A5 5 0 0 1 5.3,41.6 V6.5 A5 5 0 0 1 10.3,1.5 Z" fill="url(#pg)" stroke="#bcbcbc" stroke-width="1"/><path d="M32,1.5 V9.2 A3 3 0 0 0 35,12.2 H42.7" fill="#f4f3f2" stroke="#c4c4c4" stroke-width="1"/><g mask="url(#cm)"><path fill-rule="evenodd" d="M24.5,18 A9.7 11 0 1 0 24.5,40 A9.7 11 0 1 0 24.5,18 Z M25.4,22.4 A4.3 6.6 0 1 1 25.4,35.6 A4.3 6.6 0 1 1 25.4,22.4 Z" fill="url(#cg)"/></g></svg>
<div class="lab" style="left:201.29999999999995px;top:404.9px">main.c</div>
<svg class="fi" style="left:326.45000000000005px;top:355px" width="52" height="52" viewBox="0 0 52 52"><path d="M10.3,1.5 H32 L42.7,12.2 V41.6 A5 5 0 0 1 37.7,46.6 H10.3 A5 5 0 0 1 5.3,41.6 V6.5 A5 5 0 0 1 10.3,1.5 Z" fill="url(#pg)" stroke="#bcbcbc" stroke-width="1"/><path d="M32,1.5 V9.2 A3 3 0 0 0 35,12.2 H42.7" fill="#f4f3f2" stroke="#c4c4c4" stroke-width="1"/><path fill-rule="evenodd" d="M18,16.7 H20 L24.7,30 H25.7 V30.9 H21.2 V30 H22.3 L21.2,26.7 H16.3 L15.2,30 H16.4 V30.9 H12 V30 H13 Z M16.8,25.3 H20.8 L18.8,19.4 Z" fill="#2466ad"/><g fill="#3d9fe3"><rect x="28" y="18" width="8.1" height="1.1"/><rect x="28" y="21" width="8.1" height="1.1"/><rect x="28" y="23.9" width="8.1" height="1.1"/><rect x="28" y="26.8" width="8.1" height="1.1"/><rect x="12" y="32.9" width="24.1" height="1.1"/><rect x="12" y="35.9" width="24.1" height="1.1"/><rect x="12" y="39" width="24.1" height="1.1"/></g><circle cx="36.1" cy="36" r="11" fill="#e95420"/><path d="M32.6,34.6 V31.9 A3.2 3.2 0 0 1 39,31.9 V34.6" fill="none" stroke="#fff" stroke-width="1.8"/><rect x="30.9" y="34.1" width="10.2" height="7.9" rx="0.6" fill="#fff"/><rect x="35" y="36.7" width="2" height="3.2" fill="#e95420"/></svg>
<div class="lab" style="left:300.45000000000005px;top:404.9px">main.o</div>
<svg class="fi" style="left:425.5999999999999px;top:355px" width="52" height="52" viewBox="0 0 52 52"><path d="M10.3,1.5 H32 L42.7,12.2 V41.6 A5 5 0 0 1 37.7,46.6 H10.3 A5 5 0 0 1 5.3,41.6 V6.5 A5 5 0 0 1 10.3,1.5 Z" fill="url(#pg)" stroke="#bcbcbc" stroke-width="1"/><path d="M32,1.5 V9.2 A3 3 0 0 0 35,12.2 H42.7" fill="#f4f3f2" stroke="#c4c4c4" stroke-width="1"/><path d="M14.2,36.6 L26.6,23.6" stroke="#c8c8c8" stroke-width="3.2"/><path d="M20.8,19.6 C23.5,17.2 27.5,17.2 30.5,19.8 L33.8,25.2 L31.4,27.4 L27.6,23.8 L25,23.4 L22.6,22.2 Z" fill="#c8c8c8"/></svg>
<div class="lab" style="left:399.5999999999999px;top:404.9px">Makefile</div>
<svg class="fi" style="left:524.75px;top:355px" width="52" height="52" viewBox="0 0 52 52"><path d="M10.3,1.5 H32 L42.7,12.2 V41.6 A5 5 0 0 1 37.7,46.6 H10.3 A5 5 0 0 1 5.3,41.6 V6.5 A5 5 0 0 1 10.3,1.5 Z" fill="url(#pg)" stroke="#bcbcbc" stroke-width="1"/><path d="M32,1.5 V9.2 A3 3 0 0 0 35,12.2 H42.7" fill="#f4f3f2" stroke="#c4c4c4" stroke-width="1"/><g fill="#a2a2a2"><rect x="12" y="19.1" width="24.2" height="1.1"/><rect x="12" y="22.1" width="24.2" height="1.1"/><rect x="12" y="25.2" width="24.2" height="1.1"/><rect x="12" y="28.2" width="24.2" height="1.1"/><rect x="12" y="31.1" width="24.2" height="1.1"/><rect x="12" y="34.2" width="24.2" height="1.1"/><rect x="12" y="37.2" width="24.2" height="1.1"/></g><circle cx="36.1" cy="36" r="11" fill="#e95420"/><path d="M32.6,34.6 V31.9 A3.2 3.2 0 0 1 39,31.9 V34.6" fill="none" stroke="#fff" stroke-width="1.8"/><rect x="30.9" y="34.1" width="10.2" height="7.9" rx="0.6" fill="#fff"/><rect x="35" y="36.7" width="2" height="3.2" fill="#e95420"/></svg>
<div class="lab" style="left:498.75px;top:404.9px">Module.<br>symvers</div>
<svg class="fi" style="left:623.9000000000001px;top:355px" width="52" height="52" viewBox="0 0 52 52"><path d="M10.3,1.5 H32 L42.7,12.2 V41.6 A5 5 0 0 1 37.7,46.6 H10.3 A5 5 0 0 1 5.3,41.6 V6.5 A5 5 0 0 1 10.3,1.5 Z" fill="url(#pg)" stroke="#bcbcbc" stroke-width="1"/><path d="M32,1.5 V9.2 A3 3 0 0 0 35,12.2 H42.7" fill="#f4f3f2" stroke="#c4c4c4" stroke-width="1"/><g fill="#a2a2a2"><rect x="12" y="19.1" width="24.2" height="1.1"/><rect x="12" y="22.1" width="24.2" height="1.1"/><rect x="12" y="25.2" width="24.2" height="1.1"/><rect x="12" y="28.2" width="24.2" height="1.1"/><rect x="12" y="31.1" width="24.2" height="1.1"/><rect x="12" y="34.2" width="24.2" height="1.1"/><rect x="12" y="37.2" width="24.2" height="1.1"/></g><circle cx="36.1" cy="36" r="11" fill="#e95420"/><path d="M32.6,34.6 V31.9 A3.2 3.2 0 0 1 39,31.9 V34.6" fill="none" stroke="#fff" stroke-width="1.8"/><rect x="30.9" y="34.1" width="10.2" height="7.9" rx="0.6" fill="#fff"/><rect x="35" y="36.7" width="2" height="3.2" fill="#e95420"/></svg>
<div class="lab" style="left:597.9000000000001px;top:404.9px">modules.<br>order</div>
<svg class="fi" style="left:29.0px;top:446px" width="52" height="52" viewBox="0 0 52 52"><path d="M10.3,1.5 H32 L42.7,12.2 V41.6 A5 5 0 0 1 37.7,46.6 H10.3 A5 5 0 0 1 5.3,41.6 V6.5 A5 5 0 0 1 10.3,1.5 Z" fill="url(#pg)" stroke="#bcbcbc" stroke-width="1"/><path d="M32,1.5 V9.2 A3 3 0 0 0 35,12.2 H42.7" fill="#f4f3f2" stroke="#c4c4c4" stroke-width="1"/><g mask="url(#cm)"><path fill-rule="evenodd" d="M24.5,18 A9.7 11 0 1 0 24.5,40 A9.7 11 0 1 0 24.5,18 Z M25.4,22.4 A4.3 6.6 0 1 1 25.4,35.6 A4.3 6.6 0 1 1 25.4,22.4 Z" fill="url(#cg)"/></g></svg>
<div class="lab" style="left:3.0px;top:495.9px">qplib_fp.c</div>
<svg class="fi" style="left:128.14999999999998px;top:446px" width="52" height="52" viewBox="0 0 52 52"><path d="M10.3,1.5 H32 L42.7,12.2 V41.6 A5 5 0 0 1 37.7,46.6 H10.3 A5 5 0 0 1 5.3,41.6 V6.5 A5 5 0 0 1 10.3,1.5 Z" fill="url(#pg)" stroke="#bcbcbc" stroke-width="1"/><path d="M32,1.5 V9.2 A3 3 0 0 0 35,12.2 H42.7" fill="#f4f3f2" stroke="#c4c4c4" stroke-width="1"/><path d="M17.8,17 H21.7 V24.8 C22.8,23.6 24.2,23 26,23 C29.4,23 31.1,25 31.1,28.8 V40 H27.2 V29.6 C27.2,27.6 26.4,26.6 24.8,26.6 C22.8,26.6 21.7,27.9 21.7,30 V40 H17.8 Z" fill="url(#hg)"/></svg>
<div class="lab" style="left:102.14999999999998px;top:495.9px">qplib_fp.h</div>
<svg class="fi" style="left:227.29999999999995px;top:446px" width="52" height="52" viewBox="0 0 52 52"><path d="M10.3,1.5 H32 L42.7,12.2 V41.6 A5 5 0 0 1 37.7,46.6 H10.3 A5 5 0 0 1 5.3,41.6 V6.5 A5 5 0 0 1 10.3,1.5 Z" fill="url(#pg)" stroke="#bcbcbc" stroke-width="1"/><path d="M32,1.5 V9.2 A3 3 0 0 0 35,12.2 H42.7" fill="#f4f3f2" stroke="#c4c4c4" stroke-width="1"/><path fill-rule="evenodd" d="M18,16.7 H20 L24.7,30 H25.7 V30.9 H21.2 V30 H22.3 L21.2,26.7 H16.3 L15.2,30 H16.4 V30.9 H12 V30 H13 Z M16.8,25.3 H20.8 L18.8,19.4 Z" fill="#2466ad"/><g fill="#3d9fe3"><rect x="28" y="18" width="8.1" height="1.1"/><rect x="28" y="21" width="8.1" height="1.1"/><rect x="28" y="23.9" width="8.1" height="1.1"/><rect x="28" y="26.8" width="8.1" height="1.1"/><rect x="12" y="32.9" width="24.1" height="1.1"/><rect x="12" y="35.9" width="24.1" height="1.1"/><rect x="12" y="39" width="24.1" height="1.1"/></g><circle cx="36.1" cy="36" r="11" fill="#e95420"/><path d="M32.6,34.6 V31.9 A3.2 3.2 0 0 1 39,31.9 V34.6" fill="none" stroke="#fff" stroke-width="1.8"/><rect x="30.9" y="34.1" width="10.2" height="7.9" rx="0.6" fill="#fff"/><rect x="35" y="36.7" width="2" height="3.2" fill="#e95420"/></svg>
<div class="lab" style="left:201.29999999999995px;top:495.9px">qplib_fp.o</div>
<svg class="fi" style="left:326.45000000000005px;top:446px" width="52" height="52" viewBox="0 0 52 52"><path d="M10.3,1.5 H32 L42.7,12.2 V41.6 A5 5 0 0 1 37.7,46.6 H10.3 A5 5 0 0 1 5.3,41.6 V6.5 A5 5 0 0 1 10.3,1.5 Z" fill="url(#pg)" stroke="#bcbcbc" stroke-width="1"/><path d="M32,1.5 V9.2 A3 3 0 0 0 35,12.2 H42.7" fill="#f4f3f2" stroke="#c4c4c4" stroke-width="1"/><g mask="url(#cm)"><path fill-rule="evenodd" d="M24.5,18 A9.7 11 0 1 0 24.5,40 A9.7 11 0 1 0 24.5,18 Z M25.4,22.4 A4.3 6.6 0 1 1 25.4,35.6 A4.3 6.6 0 1 1 25.4,22.4 Z" fill="url(#cg)"/></g></svg>
<div class="lab" style="left:300.45000000000005px;top:495.9px">qplib_rcfw.<br>c</div>
<svg class="fi" style="left:425.5999999999999px;top:446px" width="52" height="52" viewBox="0 0 52 52"><path d="M10.3,1.5 H32 L42.7,12.2 V41.6 A5 5 0 0 1 37.7,46.6 H10.3 A5 5 0 0 1 5.3,41.6 V6.5 A5 5 0 0 1 10.3,1.5 Z" fill="url(#pg)" stroke="#bcbcbc" stroke-width="1"/><path d="M32,1.5 V9.2 A3 3 0 0 0 35,12.2 H42.7" fill="#f4f3f2" stroke="#c4c4c4" stroke-width="1"/><path d="M17.8,17 H21.7 V24.8 C22.8,23.6 24.2,23 26,23 C29.4,23 31.1,25 31.1,28.8 V40 H27.2 V29.6 C27.2,27.6 26.4,26.6 24.8,26.6 C22.8,26.6 21.7,27.9 21.7,30 V40 H17.8 Z" fill="url(#hg)"/></svg>
<div class="lab" style="left:399.5999999999999px;top:495.9px">qplib_rcfw.<br>h</div>
<svg class="fi" style="left:524.75px;top:446px" width="52" height="52" viewBox="0 0 52 52"><path d="M10.3,1.5 H32 L42.7,12.2 V41.6 A5 5 0 0 1 37.7,46.6 H10.3 A5 5 0 0 1 5.3,41.6 V6.5 A5 5 0 0 1 10.3,1.5 Z" fill="url(#pg)" stroke="#bcbcbc" stroke-width="1"/><path d="M32,1.5 V9.2 A3 3 0 0 0 35,12.2 H42.7" fill="#f4f3f2" stroke="#c4c4c4" stroke-width="1"/><path fill-rule="evenodd" d="M18,16.7 H20 L24.7,30 H25.7 V30.9 H21.2 V30 H22.3 L21.2,26.7 H16.3 L15.2,30 H16.4 V30.9 H12 V30 H13 Z M16.8,25.3 H20.8 L18.8,19.4 Z" fill="#2466ad"/><g fill="#3d9fe3"><rect x="28" y="18" width="8.1" height="1.1"/><rect x="28" y="21" width="8.1" height="1.1"/><rect x="28" y="23.9" width="8.1" height="1.1"/><rect x="28" y="26.8" width="8.1" height="1.1"/><rect x="12" y="32.9" width="24.1" height="1.1"/><rect x="12" y="35.9" width="24.1" height="1.1"/><rect x="12" y="39" width="24.1" height="1.1"/></g><circle cx="36.1" cy="36" r="11" fill="#e95420"/><path d="M32.6,34.6 V31.9 A3.2 3.2 0 0 1 39,31.9 V34.6" fill="none" stroke="#fff" stroke-width="1.8"/><rect x="30.9" y="34.1" width="10.2" height="7.9" rx="0.6" fill="#fff"/><rect x="35" y="36.7" width="2" height="3.2" fill="#e95420"/></svg>
<div class="lab" style="left:498.75px;top:495.9px">qplib_rcfw.<br>o</div>
<svg class="fi" style="left:623.9000000000001px;top:446px" width="52" height="52" viewBox="0 0 52 52"><path d="M10.3,1.5 H32 L42.7,12.2 V41.6 A5 5 0 0 1 37.7,46.6 H10.3 A5 5 0 0 1 5.3,41.6 V6.5 A5 5 0 0 1 10.3,1.5 Z" fill="url(#pg)" stroke="#bcbcbc" stroke-width="1"/><path d="M32,1.5 V9.2 A3 3 0 0 0 35,12.2 H42.7" fill="#f4f3f2" stroke="#c4c4c4" stroke-width="1"/><g mask="url(#cm)"><path fill-rule="evenodd" d="M24.5,18 A9.7 11 0 1 0 24.5,40 A9.7 11 0 1 0 24.5,18 Z M25.4,22.4 A4.3 6.6 0 1 1 25.4,35.6 A4.3 6.6 0 1 1 25.4,22.4 Z" fill="url(#cg)"/></g></svg>
<div class="lab" style="left:597.9000000000001px;top:495.9px">qplib_res.c</div>
</div>
</div>
</body></html>
